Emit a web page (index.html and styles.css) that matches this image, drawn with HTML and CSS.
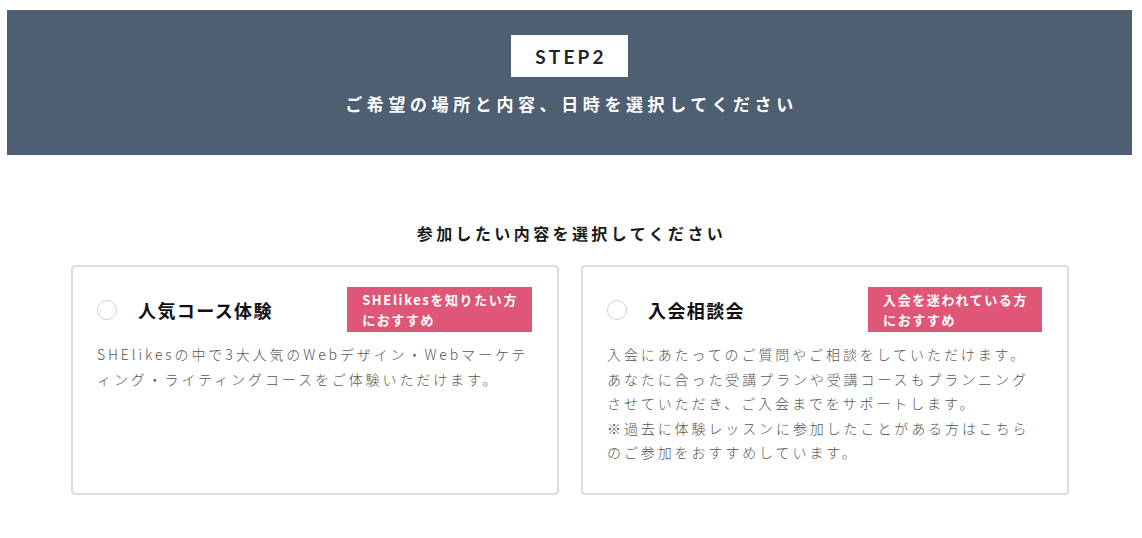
FILE: index.html
```html
<!DOCTYPE html>
<html lang="ja">
<head>
<meta charset="utf-8">
<link rel="stylesheet" href="styles.css">
</head>
<body>
<div class="page">
  <header class="band">
    <div class="step">STEP2</div>
    <p class="band-title">ご希望の場所と内容、日時を選択してください</p>
  </header>
  <section class="select">
    <h2 class="select-title">参加したい内容を選択してください</h2>
    <div class="cards">
      <label class="card">
        <div class="card-head">
          <span class="radio"></span>
          <span class="card-title">人気コース体験</span>
          <span class="badge">SHElikesを知りたい方<br>におすすめ</span>
        </div>
        <p class="card-text">SHElikesの中で3大人気のWebデザイン・Webマーケテ<br>ィング・ライティングコースをご体験いただけます。</p>
      </label>
      <label class="card">
        <div class="card-head">
          <span class="radio"></span>
          <span class="card-title">入会相談会</span>
          <span class="badge">入会を迷われている方<br>におすすめ</span>
        </div>
        <p class="card-text">入会にあたってのご質問やご相談をしていただけます。<br>あなたに合った受講プランや受講コースもプランニング<br>させていただき、ご入会までをサポートします。<br>※過去に体験レッスンに参加したことがある方はこちら<br>のご参加をおすすめしています。</p>
      </label>
    </div>
  </section>
</div>
</body>
</html>
```

FILE: styles.css
```css
* { box-sizing: border-box; }
html, body { margin: 0; padding: 0; background: #fff; }
body {
  font-family: "Noto Sans CJK JP", "Noto Sans", sans-serif;
  color: #222;
}
.page {
  width: 1142px;
  padding: 10px 10px 0 7px;
}
.band {
  height: 145px;
  background: #4e5f71;
  display: flex;
  flex-direction: column;
  align-items: center;
  padding-top: 25px;
}
.step {
  width: 117px;
  height: 42px;
  background: #fff;
  color: #1f2630;
  font-family: "Lato", "Noto Sans", sans-serif;
  font-weight: 700;
  font-size: 19px;
  letter-spacing: 3.2px;
  display: flex;
  align-items: center;
  justify-content: center;
  padding-left: 3px;
}
.band-title {
  margin: 14px 0 0;
  color: #fff;
  font-size: 17px;
  font-weight: 700;
  letter-spacing: 4.6px;
  line-height: 26px;
  padding-left: 4px;
}
.select {
  padding: 66px 63px 0 64px;
}
.select-title {
  margin: 0 0 20px;
  text-align: center;
  font-size: 16px;
  font-weight: 700;
  letter-spacing: 3.4px;
  line-height: 24px;
  color: #1a1a1a;
  padding-left: 3px;
}
.cards {
  display: flex;
  gap: 22px;
}
.card {
  flex: 1 1 0;
  border: 2px solid #dcdcdc;
  border-radius: 4px;
  padding: 20px 25px 28px 24px;
  display: block;
}
.card-head {
  display: flex;
  align-items: center;
}
.radio {
  width: 20px;
  height: 20px;
  border: 1px solid #cfcfcf;
  border-radius: 50%;
  flex: none;
  margin-top: 1px;
}
.card-title {
  margin-left: 21px;
  font-size: 18px;
  font-weight: 700;
  letter-spacing: 1.4px;
  color: #111;
  flex: 1;
}
.badge {
  background: #df5677;
  color: #fff;
  font-size: 13px;
  font-weight: 700;
  letter-spacing: 1.6px;
  line-height: 20px;
  padding: 3px 14px 2px 15px;
  flex: none;
}
.card-text {
  margin: 10px 0 0;
  font-size: 14px;
  font-weight: 300;
  letter-spacing: 2.9px;
  line-height: 24.6px;
  color: #555;
  white-space: nowrap;
}
```
